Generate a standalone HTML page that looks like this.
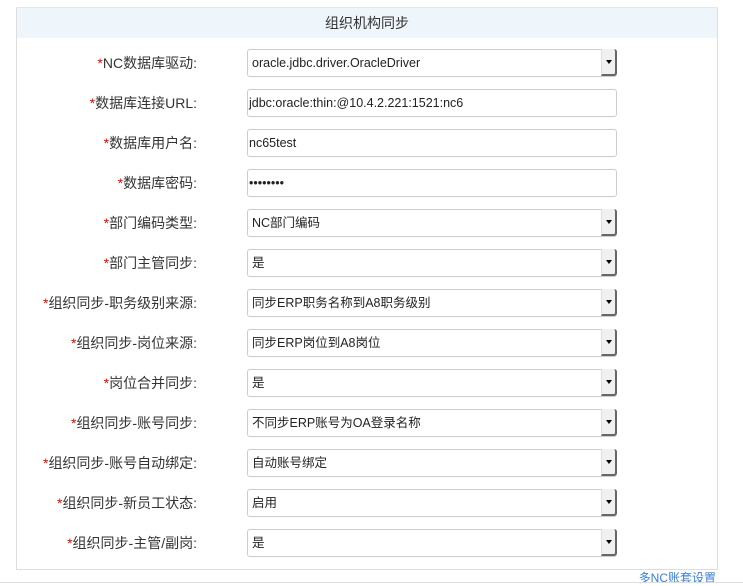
<!DOCTYPE html>
<html><head><meta charset="utf-8"><style>
body{margin:0;width:743px;height:585px;background:#fff;font-family:"Liberation Sans","Noto Sans CJK SC",sans-serif;position:relative;overflow:hidden}
.panel{position:absolute;left:16px;top:7px;width:700px;height:561px;border:1px solid #ddd;border-top:1px solid #e4e8ec}
.hdr{position:absolute;left:0;top:0;right:0;height:30px;background:#eef5fb;text-align:center;line-height:30px;font-size:14px;color:#333}
.row{position:absolute;left:0;width:743px;height:28px}
.lbl{position:absolute;right:546px;top:0;line-height:28px;font-size:14px;color:#333;white-space:nowrap}
.lbl b{color:#e00;font-weight:normal}
.box{position:absolute;left:247px;top:0;width:368px;height:26px;border:1px solid #ccc;border-radius:3px;font-size:12.5px;line-height:27px;color:#222;box-sizing:content-box}
.box span{padding-left:4px}
.box.t span{padding-left:1px}
.arr{position:absolute;background:#f0f0f0;border-left:1px solid #ddd;border-right:2px solid #666;border-bottom:2px solid #666;border-radius:0 3px 3px 0;box-sizing:border-box;height:27px;top:-1px;right:-1px;width:16px}
.arr:after{content:"";position:absolute;left:4px;top:11px;border-left:3px solid transparent;border-right:3px solid transparent;border-top:4px solid #000}
.bot{position:absolute;left:0;top:582px;width:743px;height:1px;background:#ddd}
.link{position:absolute;right:27px;top:569px;font-size:12px;color:#3a7fd5}
</style></head><body>
<div class="panel"><div class="hdr">组织机构同步</div></div>
<div class="row" style="top:49px"><div class="lbl"><b>*</b>NC数据库驱动:</div><div class="box"><span>oracle.jdbc.driver.OracleDriver</span><div class="arr"></div></div></div>
<div class="row" style="top:89px"><div class="lbl"><b>*</b>数据库连接URL:</div><div class="box t"><span>jdbc:oracle:thin:@10.4.2.221:1521:nc6</span></div></div>
<div class="row" style="top:129px"><div class="lbl"><b>*</b>数据库用户名:</div><div class="box t"><span>nc65test</span></div></div>
<div class="row" style="top:169px"><div class="lbl"><b>*</b>数据库密码:</div><div class="box t"><span>••••••••</span></div></div>
<div class="row" style="top:209px"><div class="lbl"><b>*</b>部门编码类型:</div><div class="box"><span>NC部门编码</span><div class="arr"></div></div></div>
<div class="row" style="top:249px"><div class="lbl"><b>*</b>部门主管同步:</div><div class="box"><span>是</span><div class="arr"></div></div></div>
<div class="row" style="top:289px"><div class="lbl"><b>*</b>组织同步-职务级别来源:</div><div class="box"><span>同步ERP职务名称到A8职务级别</span><div class="arr"></div></div></div>
<div class="row" style="top:329px"><div class="lbl"><b>*</b>组织同步-岗位来源:</div><div class="box"><span>同步ERP岗位到A8岗位</span><div class="arr"></div></div></div>
<div class="row" style="top:369px"><div class="lbl"><b>*</b>岗位合并同步:</div><div class="box"><span>是</span><div class="arr"></div></div></div>
<div class="row" style="top:409px"><div class="lbl"><b>*</b>组织同步-账号同步:</div><div class="box"><span>不同步ERP账号为OA登录名称</span><div class="arr"></div></div></div>
<div class="row" style="top:449px"><div class="lbl"><b>*</b>组织同步-账号自动绑定:</div><div class="box"><span>自动账号绑定</span><div class="arr"></div></div></div>
<div class="row" style="top:489px"><div class="lbl"><b>*</b>组织同步-新员工状态:</div><div class="box"><span>启用</span><div class="arr"></div></div></div>
<div class="row" style="top:529px"><div class="lbl"><b>*</b>组织同步-主管/副岗:</div><div class="box"><span>是</span><div class="arr"></div></div></div>
<div class="link">多NC账套设置</div>
<div class="bot"></div>
</body></html>
